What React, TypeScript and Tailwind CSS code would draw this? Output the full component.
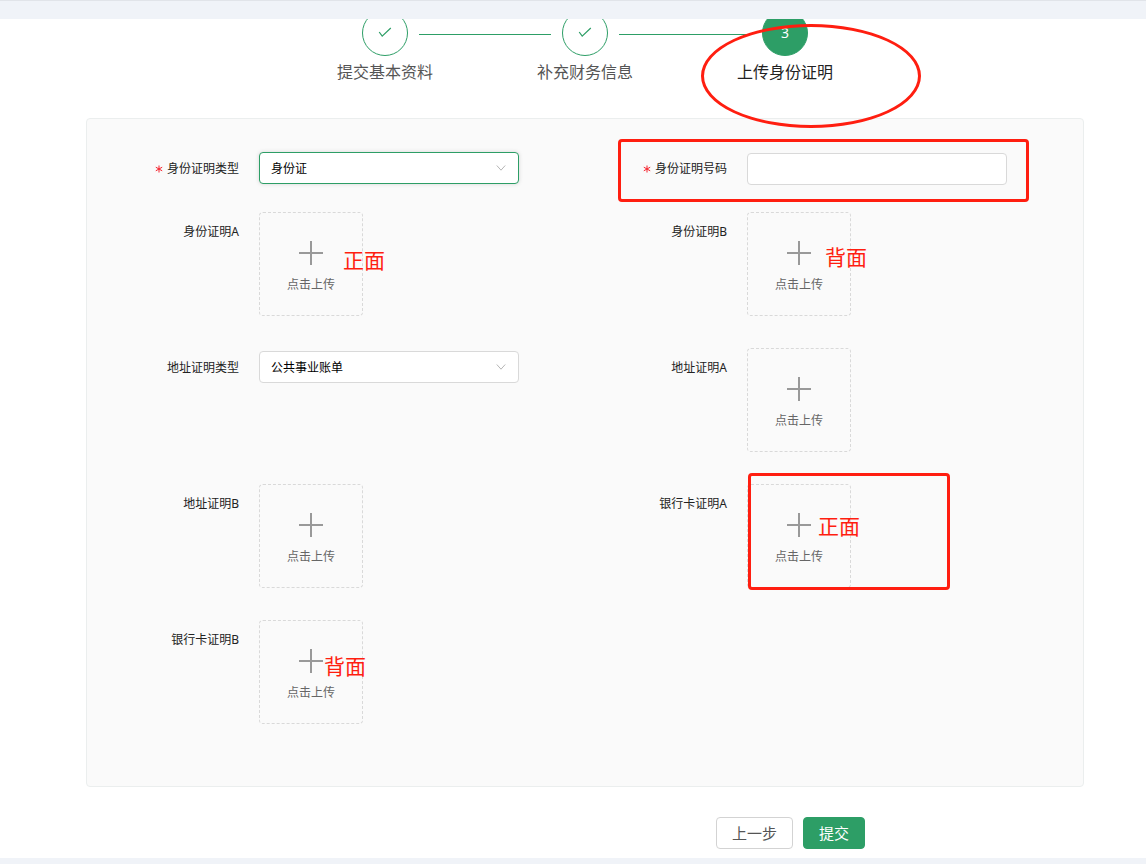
import { useState } from "react";
import type { ReactNode } from "react";

const steps = ["提交基本资料", "补充财务信息", "上传身份证明"];
const currentStep = 2;

interface FieldProps {
  id: string;
  label: string;
  required?: boolean;
  marked?: boolean;
  children: ReactNode;
}

function Field({ id, label, required, marked, children }: FieldProps) {
  return (
    <div className="relative flex items-start">
      <label
        htmlFor={id}
        className="flex w-[162px] shrink-0 items-center justify-end gap-1 pr-5 text-xs leading-10 text-[#222]"
      >
        {required && (
          <svg viewBox="0 0 8 8" className="h-2 w-2 text-[#f5222d]" stroke="currentColor" strokeWidth="1">
            <path d="M4 0.5v7M0.8 2.2l6.4 3.6M7.2 2.2l-6.4 3.6" />
          </svg>
        )}
        {label}
      </label>
      {children}
      {marked && (
        <span className="pointer-events-none absolute -top-2.5 left-[33px] h-[63px] w-[411px] rounded border-3 border-[#ff1e10]" />
      )}
    </div>
  );
}

interface SelectFieldProps {
  id: string;
  label: string;
  options: string[];
  required?: boolean;
  active?: boolean;
}

function SelectField({ id, label, options, required, active }: SelectFieldProps) {
  const [value, setValue] = useState(options[0]);

  return (
    <Field id={id} label={label} required={required}>
      <div className="relative my-[3px] w-[260px]">
        <select
          id={id}
          value={value}
          onChange={(e) => setValue(e.target.value)}
          className={`block h-8 w-full appearance-none rounded border bg-white px-[11px] pt-0.5 text-xs text-black outline-none ${
            active ? "border-[#2d9e66] shadow-[0_0_4px_rgba(0,0,0,0.15)]" : "border-[#d9d9d9]"
          }`}
        >
          {options.map((option) => (
            <option key={option}>{option}</option>
          ))}
        </select>
        <svg
          viewBox="0 0 10 6"
          fill="none"
          stroke="#b5b5b5"
          className="pointer-events-none absolute top-[13px] right-[13px] h-1.5 w-2.5"
        >
          <path d="M0.8 0.5L5 5.2L9.2 0.5" />
        </svg>
      </div>
    </Field>
  );
}

interface UploadFieldProps {
  id: string;
  label: string;
  children?: ReactNode;
}

function UploadField({ id, label, children }: UploadFieldProps) {
  return (
    <Field id={id} label={label}>
      <div className="relative mb-8">
        <button
          id={id}
          type="button"
          className="flex h-26 w-26 cursor-pointer flex-col items-center gap-3 rounded border border-dashed border-[#d9d9d9] pt-7 text-xs text-[#666]"
        >
          <svg viewBox="0 0 24 24" className="h-6 w-6" stroke="#999" strokeWidth="2">
            <path d="M12 0v24M0 12h24" />
          </svg>
          点击上传
        </button>
        {children}
      </div>
    </Field>
  );
}

const noteClass = "pointer-events-none absolute text-[21px] leading-8 whitespace-nowrap text-[#ff1e10]";

export default function App() {
  const [idNumber, setIdNumber] = useState("");

  return (
    <div className="min-h-screen bg-[#f0f3f8] font-['Noto_Sans','Noto_Sans_CJK_SC',sans-serif]">
      <header className="relative z-10 h-[19px] border-t border-[#e1e4e9] bg-[#f0f3f8]" />

      <main className="bg-white pr-[62px] pb-[9px] pl-[86px]">
        {/* Steps */}
        <ol className="relative -top-[9px] -mb-[9px] flex justify-center pb-[34px]">
          {steps.map((title, i) => (
            <li key={title} className="relative flex w-50 flex-col items-center gap-1">
              <div className="flex w-full items-center gap-[11px]">
                <span className={`h-1 flex-1 ${i > 0 ? "border-b border-[#2d9e66]" : ""}`} />
                <span
                  className={`flex h-[46px] w-[46px] items-center justify-center rounded-full border border-[#2d9e66] ${
                    i === currentStep ? "bg-[#2d9e66] text-sm text-white" : "text-[#2d9e66]"
                  }`}
                >
                  {i < currentStep ? (
                    <svg viewBox="0 0 14 12" fill="none" stroke="currentColor" strokeWidth="1.2" className="h-3 w-3.5">
                      <path d="M1.2 5l3 4.2L12.8 1" />
                    </svg>
                  ) : (
                    i + 1
                  )}
                </span>
                <span className={`h-1 flex-1 ${i < currentStep ? "border-b border-[#2d9e66]" : ""}`} />
              </div>
              <span className={`text-base ${i === currentStep ? "text-[#222]" : "text-[#555]"}`}>{title}</span>
              {i === currentStep && (
                <span className="pointer-events-none absolute top-3.5 left-4 z-10 h-26 w-[220px] rounded-[50%] border-3 border-[#ff1e10]" />
              )}
            </li>
          ))}
        </ol>

        <form onSubmit={(e) => e.preventDefault()}>
          <div className="grid grid-cols-2 rounded border border-[#ebeeee] bg-[#fafafa] px-2.5 py-[30px]">
            <SelectField id="id-type" label="身份证明类型" options={["身份证", "护照"]} required active />
            <Field id="id-number" label="身份证明号码" required marked>
              <input
                id="id-number"
                type="text"
                value={idNumber}
                onChange={(e) => setIdNumber(e.target.value)}
                className="mt-1 mb-[27px] h-8 w-[260px] rounded border border-[#d9d9d9] bg-white px-[11px] text-xs outline-none"
              />
            </Field>

            <UploadField id="id-a" label="身份证明A">
              <span className={`${noteClass} top-8 left-[84px]`}>正面</span>
            </UploadField>
            <UploadField id="id-b" label="身份证明B">
              <span className={`${noteClass} top-[29px] left-[78px]`}>背面</span>
            </UploadField>

            <SelectField id="address-type" label="地址证明类型" options={["公共事业账单", "银行账单"]} />
            <UploadField id="address-a" label="地址证明A" />

            <UploadField id="address-b" label="地址证明B" />
            <UploadField id="bank-a" label="银行卡证明A">
              <span className="pointer-events-none absolute -top-[11px] left-px h-[117px] w-[202px] rounded border-3 border-[#ff1e10]" />
              <span className={`${noteClass} top-[26px] left-[71px]`}>正面</span>
            </UploadField>

            <UploadField id="bank-b" label="银行卡证明B">
              <span className={`${noteClass} top-[30px] left-[65px]`}>背面</span>
            </UploadField>
          </div>

          {/* Actions */}
          <div className="mt-[30px] flex justify-end gap-2.5 pr-[219px]">
            <button type="button" className="h-8 rounded border border-[#d3d3d3] bg-white px-[15px] text-[15px] leading-7 text-[#555]">
              上一步
            </button>
            <button type="submit" className="h-8 rounded border border-[#2d9e66] bg-[#2d9e66] px-[15px] text-[15px] leading-7 text-white">
              提交
            </button>
          </div>
        </form>
      </main>
    </div>
  );
}
